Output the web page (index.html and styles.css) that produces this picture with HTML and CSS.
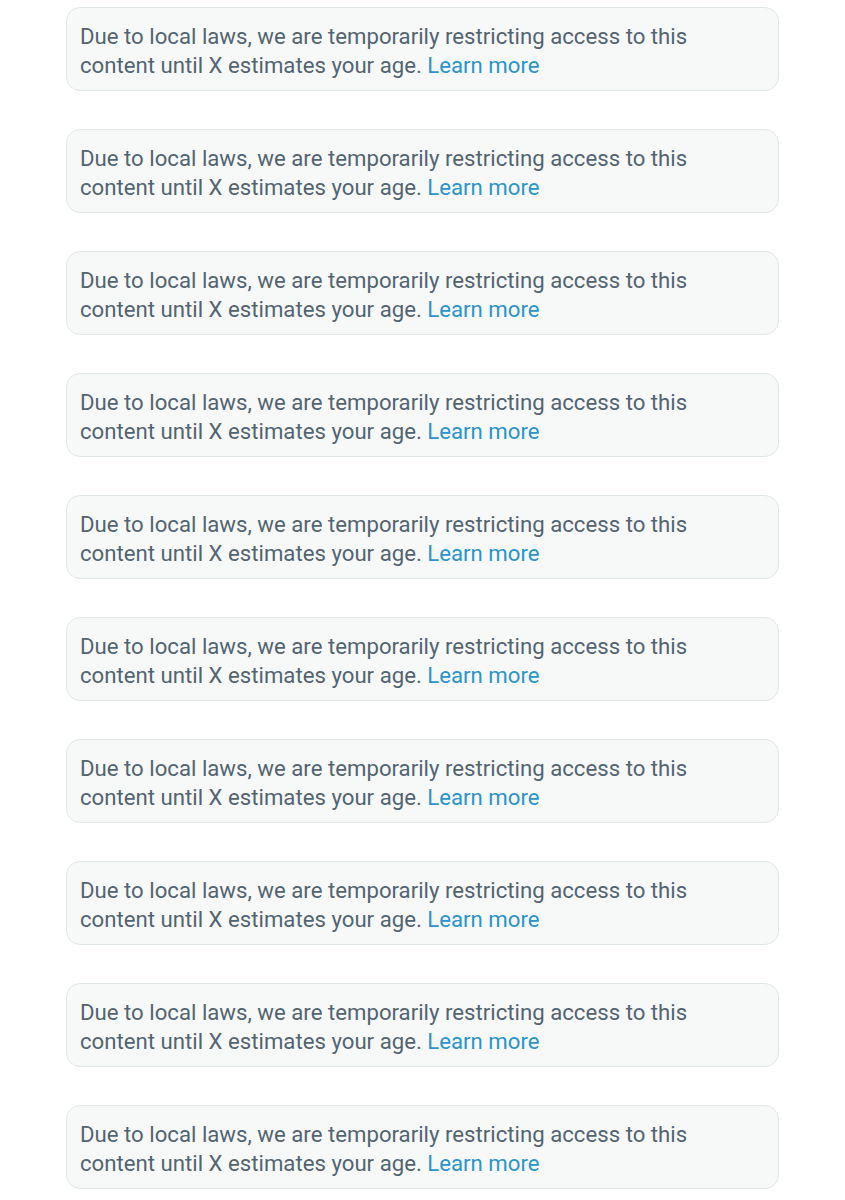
FILE: index.html
```html
<!DOCTYPE html>
<html>
<head>
<meta charset="utf-8">
<link rel="stylesheet" href="styles.css">
</head>
<body>
<div class="list">
  <div class="notice">Due to local laws, we are temporarily restricting access to this content until X estimates your age. <a class="link" href="#">Learn more</a></div>
  <div class="notice">Due to local laws, we are temporarily restricting access to this content until X estimates your age. <a class="link" href="#">Learn more</a></div>
  <div class="notice">Due to local laws, we are temporarily restricting access to this content until X estimates your age. <a class="link" href="#">Learn more</a></div>
  <div class="notice">Due to local laws, we are temporarily restricting access to this content until X estimates your age. <a class="link" href="#">Learn more</a></div>
  <div class="notice">Due to local laws, we are temporarily restricting access to this content until X estimates your age. <a class="link" href="#">Learn more</a></div>
  <div class="notice">Due to local laws, we are temporarily restricting access to this content until X estimates your age. <a class="link" href="#">Learn more</a></div>
  <div class="notice">Due to local laws, we are temporarily restricting access to this content until X estimates your age. <a class="link" href="#">Learn more</a></div>
  <div class="notice">Due to local laws, we are temporarily restricting access to this content until X estimates your age. <a class="link" href="#">Learn more</a></div>
  <div class="notice">Due to local laws, we are temporarily restricting access to this content until X estimates your age. <a class="link" href="#">Learn more</a></div>
  <div class="notice">Due to local laws, we are temporarily restricting access to this content until X estimates your age. <a class="link" href="#">Learn more</a></div>
</div>
</body>
</html>
```
FILE: styles.css
```css
html, body {
  margin: 0;
  padding: 0;
  background: #ffffff;
}
.list {
  display: flex;
  flex-direction: column;
  gap: 38px;
  padding: 7px 66px 0 66px;
  width: 713px;
}
.notice {
  box-sizing: border-box;
  height: 84px;
  padding: 14px 60px 0 13px;
  background: #f7f9f9;
  border: 1px solid #e1e6e8;
  border-radius: 14px;
  font-family: Roboto, "Noto Sans", sans-serif;
  font-size: 22.2px;
  line-height: 29px;
  color: #536471;
}
.link {
  color: #2b94c9;
  text-decoration: none;
}
```
